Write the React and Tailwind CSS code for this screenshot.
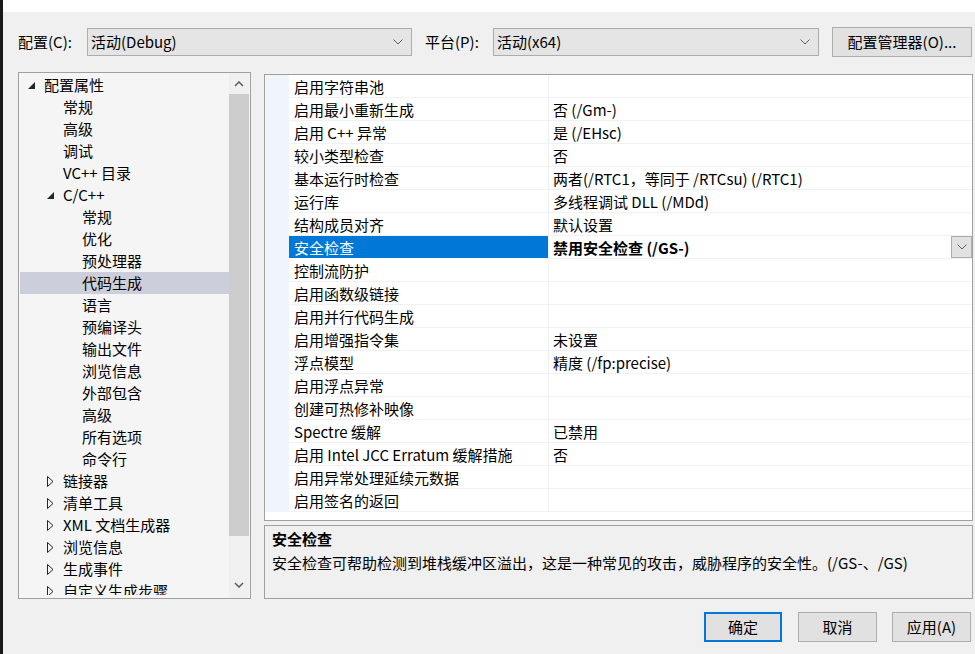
import React from "react";

const FONT = "font-['Noto_Sans_CJK_SC','Noto_Sans',sans-serif]";

function Chevron({ className = "" }) {
  return (
    <svg width="10" height="6" viewBox="0 0 10 6" className={className}>
      <polyline points="0.5,0.5 5,5 9.5,0.5" fill="none" stroke="#606060" strokeWidth="1" />
    </svg>
  );
}

function Dropdown({ width, text }) {
  return (
    <div
      className={`${width} h-[28px] bg-[#e5e5e5] border border-[#adadad] flex items-center pl-[3px] pr-[8px]`}
    >
      <span className="flex-1 text-[15px] leading-[20px] text-black">{text}</span>
      <Chevron />
    </div>
  );
}

const tree = [
  { l: 0, t: "配置属性", s: "open" },
  { l: 1, t: "常规" },
  { l: 1, t: "高级" },
  { l: 1, t: "调试" },
  { l: 1, t: "VC++ 目录" },
  { l: 1, t: "C/C++", s: "open" },
  { l: 2, t: "常规" },
  { l: 2, t: "优化" },
  { l: 2, t: "预处理器" },
  { l: 2, t: "代码生成", sel: true },
  { l: 2, t: "语言" },
  { l: 2, t: "预编译头" },
  { l: 2, t: "输出文件" },
  { l: 2, t: "浏览信息" },
  { l: 2, t: "外部包含" },
  { l: 2, t: "高级" },
  { l: 2, t: "所有选项" },
  { l: 2, t: "命令行" },
  { l: 1, t: "链接器", s: "closed" },
  { l: 1, t: "清单工具", s: "closed" },
  { l: 1, t: "XML 文档生成器", s: "closed" },
  { l: 1, t: "浏览信息", s: "closed" },
  { l: 1, t: "生成事件", s: "closed" },
  { l: 1, t: "自定义生成步骤", s: "closed" },
];

const padByLevel = ["pl-[8px]", "pl-[27px]", "pl-[46px]"];

function TreeIcon({ s }) {
  if (s === "open")
    return (
      <svg width="7" height="7" viewBox="0 0 7 7">
        <polygon points="7,0 7,7 0,7" fill="#262626" />
      </svg>
    );
  if (s === "closed")
    return (
      <svg width="7" height="11" viewBox="0 0 7 11">
        <polygon points="0.5,0.5 6,5.5 0.5,10.5" fill="none" stroke="#262626" strokeWidth="1" />
      </svg>
    );
  return null;
}

const rows = [
  ["启用字符串池", ""],
  ["启用最小重新生成", "否 (/Gm-)"],
  ["启用 C++ 异常", "是 (/EHsc)"],
  ["较小类型检查", "否"],
  ["基本运行时检查", "两者(/RTC1，等同于 /RTCsu) (/RTC1)"],
  ["运行库", "多线程调试 DLL (/MDd)"],
  ["结构成员对齐", "默认设置"],
  ["安全检查", "禁用安全检查 (/GS-)", true],
  ["控制流防护", ""],
  ["启用函数级链接", ""],
  ["启用并行代码生成", ""],
  ["启用增强指令集", "未设置"],
  ["浮点模型", "精度 (/fp:precise)"],
  ["启用浮点异常", ""],
  ["创建可热修补映像", ""],
  ["Spectre 缓解", "已禁用"],
  ["启用 Intel JCC Erratum 缓解措施", "否"],
  ["启用异常处理延续元数据", ""],
  ["启用签名的返回", ""],
];

function Button({ children, primary, width }) {
  return (
    <div
      className={`${width} h-[30px] bg-[#e1e1e1] flex items-center justify-center text-[15px] leading-[20px] text-black ${
        primary ? "border-2 border-[#0078d7]" : "border border-[#adadad]"
      }`}
    >
      {children}
    </div>
  );
}

export default function App() {
  return (
    <div className={`w-[975px] h-[654px] flex overflow-hidden ${FONT} text-black`}>
      <div className="w-[3px] bg-[#1a1a1a] shrink-0" />
      <div className="flex-1 flex flex-col">
        <div className="h-[12px] bg-white shrink-0" />
        <div className="flex-1 bg-[#f0f0f0] pl-[15px] pt-[15px]">
          {/* top row */}
          <div className="flex items-center h-[30px]">
            <div className="w-[69px] text-[15px] leading-[20px]">配置(C):</div>
            <Dropdown width="w-[325px]" text="活动(Debug)" />
            <div className="w-[68px] ml-[13px] text-[15px] leading-[20px]">平台(P):</div>
            <Dropdown width="w-[326px]" text="活动(x64)" />
            <div className="ml-[13px]">
              <Button width="w-[140px]">配置管理器(O)...</Button>
            </div>
          </div>

          {/* middle */}
          <div className="flex mt-[15px]">
            {/* tree */}
            <div className="w-[233px] h-[527px] border border-[#a0a0a0] bg-[#f5f5f5] flex">
              <div className="flex-1 overflow-hidden pt-[1px] pl-[1px] mb-[3px]">
                {tree.map((n, i) => (
                  <div
                    key={i}
                    className={`h-[22px] flex items-center ${padByLevel[n.l]} ${
                      n.sel ? "bg-[#cccedb]" : ""
                    }`}
                  >
                    <div className="w-[16px] flex items-center">
                      <TreeIcon s={n.s} />
                    </div>
                    <span className="text-[15px] leading-[20px] whitespace-nowrap">{n.t}</span>
                  </div>
                ))}
              </div>
              <div className="w-[20px] mr-[1px] bg-[#f0f0f0] flex flex-col">
                <div className="h-[21px] flex items-center justify-center">
                  <svg width="10" height="6" viewBox="0 0 10 6">
                    <polyline points="1,5 5,1 9,5" fill="none" stroke="#606060" strokeWidth="1.6" />
                  </svg>
                </div>
                <div className="h-[442px] bg-[#cdcdcd]" />
                <div className="flex-1" />
                <div className="h-[24px] flex items-start justify-center pt-[8px]">
                  <svg width="10" height="6" viewBox="0 0 10 6">
                    <polyline points="1,1 5,5 9,1" fill="none" stroke="#606060" strokeWidth="1.6" />
                  </svg>
                </div>
              </div>
            </div>

            {/* right column */}
            <div className="ml-[13px] w-[709px] flex flex-col">
              <div className="mt-[2px] h-[447px] border border-[#a0a0a0] bg-white flex flex-col">
                {rows.map(([name, value, sel], i) => (
                  <div key={i} className="flex h-[23px]">
                    <div className="w-[24px] bg-[#f0f5fb]" />
                    <div
                      className={`w-[259px] h-[23px] border-b border-[#f0f0f5] flex items-center pl-[5px] pt-[1px] text-[15px] leading-[20px] whitespace-nowrap ${
                        sel ? "bg-[#0078d7] text-white border-b-white" : ""
                      }`}
                    >
                      {name}
                    </div>
                    <div className="flex-1 h-[23px] border-b border-l border-[#f0f0f5] flex items-center pl-[4px] text-[15px] leading-[20px] whitespace-nowrap">
                      <span className={`flex-1 pt-[1px] ${sel ? "font-bold" : ""}`}>{value}</span>
                      {sel && (
                        <div className="w-[21px] h-[22px] bg-[#e1e1e1] border border-[#adadad] flex items-center justify-center">
                          <Chevron />
                        </div>
                      )}
                    </div>
                  </div>
                ))}
              </div>
              <div className="mt-[4px] h-[74px] border border-[#a0a0a0] bg-[#f0f0f0] pl-[7px] pt-[1px]">
                <div className="text-[15px] leading-[24px] font-bold">安全检查</div>
                <div className="text-[15px] leading-[24px]">
                  安全检查可帮助检测到堆栈缓冲区溢出，这是一种常见的攻击，威胁程序的安全性。(/GS-、/GS)
                </div>
              </div>
            </div>
          </div>

          {/* buttons */}
          <div className="flex mt-[13px] pl-[686px]">
            <Button primary width="w-[78px]">确定</Button>
            <div className="ml-[16px]">
              <Button width="w-[79px]">取消</Button>
            </div>
            <div className="ml-[15px]">
              <Button width="w-[79px]">应用(A)</Button>
            </div>
          </div>
        </div>
      </div>
    </div>
  );
}
